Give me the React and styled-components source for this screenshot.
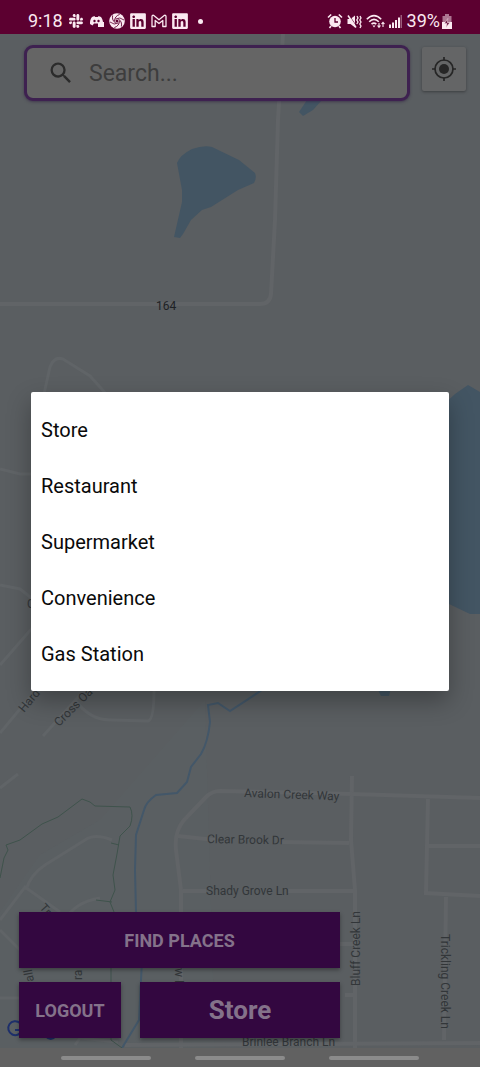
import React, { useState } from 'react';
import styled, { createGlobalStyle } from 'styled-components';
import { FaSlack, FaLinkedin } from 'react-icons/fa';
import { MdSearch } from 'react-icons/md';

const GlobalStyle = createGlobalStyle`
  * {
    box-sizing: border-box;
  }

  body {
    margin: 0;
    font-family: Roboto, 'Noto Sans', sans-serif;
  }

  button,
  input {
    font-family: inherit;
  }
`;

const Screen = styled.div`
  display: flex;
  flex-direction: column;
  min-height: 100vh;
  background: #5a5e61;
`;

const StatusBar = styled.header`
  display: flex;
  justify-content: space-between;
  align-items: center;
  height: 34px;
  padding: 8px 28px 0;
  background: #5c0030;
  color: #fbe9f1;
`;

const StatusGroup = styled.div`
  display: flex;
  align-items: center;
  gap: ${(props) => props.$gap}px;
`;

const StatusText = styled.span`
  font-size: 18px;
  line-height: 20px;
`;

const LinkedinIcon = styled(FaLinkedin)`
  width: 16px;
  height: 18px;
`;

const Dot = styled.span`
  width: 5px;
  height: 5px;
  margin-left: 5px;
  border-radius: 50%;
  background: currentColor;
`;

const MapArea = styled.main`
  position: relative;
  display: flex;
  flex: 1;
  flex-direction: column;
  justify-content: space-between;
  overflow: hidden;
`;

const MapCanvas = styled.svg`
  position: absolute;
  inset: 0;
  width: 100%;
  height: 100%;
  font-size: 12px;
`;

const SearchRow = styled.div`
  position: relative;
  display: flex;
  align-items: flex-start;
  gap: 12px;
  padding: 11px 14px 0 24px;
`;

const SearchBox = styled.label`
  display: flex;
  flex: 1;
  align-items: center;
  gap: 14px;
  min-width: 0;
  height: 56px;
  padding: 0 20px;
  border: 3px solid #3e2150;
  border-radius: 9px;
  background: #656565;
  box-shadow: 0 1px 3px rgba(40, 20, 60, 0.5);
  color: #2b2b2b;
`;

const SearchInput = styled.input`
  flex: 1;
  min-width: 0;
  padding: 0;
  border: 0;
  outline: 0;
  background: transparent;
  color: #2b2b2b;
  font-size: 23px;

  &::placeholder {
    color: #3d3d3d;
    opacity: 1;
  }
`;

const LocateButton = styled.button`
  display: flex;
  align-items: center;
  justify-content: center;
  width: 44px;
  height: 44px;
  margin-top: 2px;
  padding: 0;
  border: 0;
  border-radius: 2px;
  background: #646566;
  box-shadow: 0 1px 3px rgba(0, 0, 0, 0.35);
  color: #262626;
`;

const Actions = styled.div`
  position: relative;
  display: flex;
  flex-direction: column;
  gap: 14px;
  padding: 0 140px 10px 19px;
`;

const ActionRow = styled.div`
  display: flex;
  gap: 19px;
`;

const ActionButton = styled.button`
  flex: ${(props) => (props.$width ? 'none' : '1 1 auto')};
  width: ${(props) => (props.$width ? `${props.$width}px` : 'auto')};
  height: 56px;
  padding: 0;
  border: 0;
  background: #330740;
  box-shadow: 0 2px 4px rgba(0, 0, 0, 0.35);
  color: #84728a;
  font-size: ${(props) => (props.$large ? 26 : 18)}px;
  font-weight: 700;
`;

const Overlay = styled.div`
  position: absolute;
  inset: 0;
  display: flex;
  align-items: center;
  justify-content: center;
  padding: 0 31px;
`;

const Dialog = styled.div`
  display: flex;
  flex-direction: column;
  width: 100%;
  padding: 10px 0 9px;
  border-radius: 2px;
  background: #fff;
  box-shadow: 0 10px 24px rgba(0, 0, 0, 0.3);
`;

const Option = styled.button`
  height: 56px;
  padding: 0 10px;
  border: 0;
  background: transparent;
  color: #0a0a0a;
  font-size: 20px;
  text-align: left;
`;

const NavBar = styled.nav`
  display: flex;
  justify-content: center;
  gap: 44px;
  height: 19px;
  padding-top: 8px;
  background: #616161;
`;

const NavHandle = styled.button`
  width: 90px;
  height: 4px;
  padding: 0;
  border: 0;
  border-radius: 2px;
  background: #8b8b8b;
`;

const places = ['Store', 'Restaurant', 'Supermarket', 'Convenience', 'Gas Station'];

const DiscordIcon = () => (
  <svg width="15" height="14" viewBox="0 0 15 14" fill="currentColor">
    <path d="M3 3 5.500 2 6 3h3l.5-1L12 3c1.200 1.500 1.800 3.200 2 5H9.500V9.500H5L3.500 11.500 1 10C.8 7.500 1.400 5 3 3z" />
    <path d="M9 8h6v5H9z" />
    <circle cx="5.500" cy="7" r="1.200" fill="#5c0030" />
    <circle cx="9.500" cy="7" r="1.200" fill="#5c0030" />
  </svg>
);

const swirlAngles = [0, 60, 120, 180, 240, 300];

const SwirlIcon = () => (
  <svg width="16" height="16" viewBox="0 0 16 16">
    <circle cx="8" cy="8" r="7.800" fill="currentColor" />
    <g fill="none" stroke="#5c0030" strokeWidth="0.800">
      {swirlAngles.map((angle) => (
        <path key={angle} d="M6.500 6Q11 3.500 15 7" transform={`rotate(${angle} 8 8)`} />
      ))}
    </g>
    <circle cx="8" cy="8" r="1.500" fill="#5c0030" />
  </svg>
);

const GmailIcon = () => (
  <svg width="16" height="14" viewBox="0 0 16 14" fill="none" stroke="currentColor" strokeWidth="1.300">
    <path d="M1 12.500V2.500Q1 1 2.500 1.300L8 5.800 13.500 1.300Q15 1 15 2.500V12.500H11.800V6.500L8 9.500 4.200 6.500V12.500z" strokeLinejoin="round" />
  </svg>
);

const AlarmIcon = () => (
  <svg width="16" height="16" viewBox="0 0 16 16">
    <circle cx="8" cy="8.500" r="5.800" fill="currentColor" />
    <path d="M1 4.500 4.200 1.500M15 4.500 11.800 1.500M4 13 2.500 15M12 13 13.500 15" stroke="currentColor" strokeWidth="1.600" />
    <path d="M8 5V9H11" fill="none" stroke="#5c0030" strokeWidth="1.300" />
  </svg>
);

const VibrateIcon = () => (
  <svg width="15" height="15" viewBox="0 0 15 15">
    <path d="M.5 5H3.500L8 1.500V13.500L3.500 10H.5z" fill="currentColor" />
    <path d="M2 1 10 13" stroke="#5c0030" strokeWidth="0.800" />
    <path d="M1 1.500 9 13.500" stroke="currentColor" strokeWidth="1.500" />
    <path d="M10 2 11 4 9.800 6 11 8 9.800 10M13 2 14 4 12.800 6 14 8 12.800 10 14 12 13 14" fill="none" stroke="currentColor" strokeWidth="1.300" />
  </svg>
);

const WifiIcon = () => (
  <svg width="19" height="15" viewBox="0 0 19 15" fill="none" stroke="currentColor" strokeWidth="1.600">
    <path d="M.8 5.200Q8 -2 15.200 5.200M3.200 7.800Q8 3 12.800 7.800M5.500 10.200Q8 8 10.300 10.200" />
    <path d="M6.500 11.500 8 13.500 9.500 11.500z" fill="currentColor" stroke="none" />
    <path d="M13 9V13M11.500 11.500 13 13.300 14.500 11.500M17 13V8.500M15.500 10 17 8.300 18.500 10" strokeWidth="1.100" />
  </svg>
);

const SignalIcon = () => (
  <svg width="13" height="14" viewBox="0 0 13 14" fill="currentColor">
    <path d="M0 10.500h2V14H0zM3 8.500h2V14H3zM6 6h2v8H6zM9 3.500h2V14H9z" />
    <path d="M11.500 1H13v13h-1.500z" opacity="0.400" />
  </svg>
);

const BatteryIcon = () => (
  <svg width="10" height="15" viewBox="0 0 10 15">
    <path d="M3 0h4v2h2.500v13H.5V2H3z" fill="currentColor" opacity="0.500" />
    <path d="M0 8h10v7H0z" fill="currentColor" />
    <path d="M5.800 4.500 2.500 9.500H5L4 13.500 7.800 8.500H5.300z" fill="#5c0030" stroke="#fbe9f1" strokeWidth="0.500" />
  </svg>
);

const LocateIcon = () => (
  <svg width="26" height="26" viewBox="0 0 26 26" fill="none" stroke="currentColor" strokeWidth="1.700">
    <circle cx="13" cy="13" r="9" />
    <circle cx="13" cy="13" r="5" fill="currentColor" stroke="none" />
    <path d="M13 1V4.500M13 21.500V25M1 13H4.500M21.500 13H25" />
  </svg>
);

// Viewport units of the map start right below the status bar
const StreetMap = () => (
  <MapCanvas viewBox="0 34 480 1014" preserveAspectRatio="xMidYMid slice" aria-hidden="true">
    <path d="M0 912 40 855 100 820 205 700 215 1048H0z" fill="#5a6163" opacity="0.400" />
    <g fill="#435563">
      <path d="M177 163Q180 155 192 149Q204 145 212 147L239 160 255 173Q257 178 254 183L238 190 211 207 202 210 191 220 183 234 180 238 174 237 182 202 182 190z" />
      <path d="M299 112 307 100H322L313 110 303 116z" />
      <path d="M440 408 455 394 468 385 480 392V614H470L449 604z" />
      <path d="M377 688H391L389 696H381z" />
    </g>
    <g fill="none" stroke="#616467" strokeWidth="4">
      <path d="M283 34 278 120 275 220 271 294Q270 304 260 304H0" />
      <path d="M352 776 351 840 355 890V1048" />
      <path d="M480 798 352 794 220 791Q212 791 206 797L184 820Q174 832 176 850L181 890V1048" />
      <path d="M428 799 426 893 480 896M428 846H480" />
      <path d="M446 897 444 1040" />
      <path d="M178 836 215 840M280 842 349 843M183 891H206M288 891H354" />
      <path d="M340 944H354M345 995H354M125 1045 480 1043" />
    </g>
    <g fill="none" stroke="#606467" strokeWidth="3">
      <path d="M44 394 50 367Q54 356 63 359L90 376 108 396" />
      <path d="M0 469 20 474H40M0 585 20 589 34 600" />
      <path d="M0 665 34 626M0 733 30 697M43 736 80 695" />
      <path d="M75 700Q90 720 110 720L148 721Q154 720 154 690" />
      <path d="M0 788 18 774M26 890Q30 875 45 865L85 840Q95 833 112 840" />
      <path d="M0 920 25 887 60 912M0 930 30 960M65 920Q75 902 100 898M0 998H22M75 1045 80 1038 118 1042" />
    </g>
    <path
      d="M275 690H262L230 711Q224 707 218 703L208 705 210 722Q208 742 201 754L191 767 187 782 177 793 156 795Q146 802 144 810L136 835 135 870 136 912 142 960 139 1020 122 1048"
      fill="none"
      stroke="#435769"
      strokeWidth="2"
    />
    <g fill="none" stroke="#3f534c">
      <path d="M0 878 4 858 8 850 6 845 20 840 42 824 58 817 82 799 90 802 95 806 130 807Q134 815 130 826L120 836 117 854 113 875 115 890 110 902 114 912 111 965V1040L122 1048" />
      <path d="M111 843 119 845M96 900 112 902" />
    </g>
    <g fill="#323639">
      <text x="156" y="310" fill="#1e2225">164</text>
      <text x="244" y="797" transform="rotate(2 244 797)">Avalon Creek Way</text>
      <text x="207" y="843" transform="rotate(1 207 843)">Clear Brook Dr</text>
      <text x="206" y="895">Shady Grove Ln</text>
      <text x="242" y="1046">Brinlee Branch Ln</text>
      <text x="360" y="986" transform="rotate(-90 360 986)">Bluff Creek Ln</text>
      <text x="441" y="934" transform="rotate(90 441 934)">Trickling Creek Ln</text>
      <text x="24" y="713" transform="rotate(-50 24 713)">Hard</text>
      <text x="59" y="727" transform="rotate(-45 59 727)">Cross Oa</text>
      <text x="27" y="608">C</text>
      <text x="39" y="908" transform="rotate(48 39 908)">Tr</text>
      <text x="34" y="981" transform="rotate(-100 34 981)">all</text>
      <text x="82" y="980" transform="rotate(-90 82 980)">ra</text>
      <text x="175" y="968" transform="rotate(90 175 968)">w L</text>
    </g>
    <g fill="none" stroke="#1d2f6b" strokeWidth="2">
      <path d="M20 1023A7 7 0 1 0 22 1030H15" />
      <path d="M46 1036Q51 1041 55 1036" strokeWidth="3" />
    </g>
  </MapCanvas>
);

function PhoneStatus() {
  return (
    <StatusBar>
      <StatusGroup $gap={5}>
        <StatusText>9:18</StatusText>
        <FaSlack size={16} />
        <DiscordIcon />
        <SwirlIcon />
        <LinkedinIcon />
        <GmailIcon />
        <LinkedinIcon />
        <Dot />
      </StatusGroup>
      <StatusGroup $gap={5}>
        <StatusGroup $gap={4}>
          <AlarmIcon />
          <VibrateIcon />
          <WifiIcon />
          <SignalIcon />
        </StatusGroup>
        <StatusGroup $gap={2}>
          <StatusText>39%</StatusText>
          <BatteryIcon />
        </StatusGroup>
      </StatusGroup>
    </StatusBar>
  );
}

function App() {
  const [place, setPlace] = useState('Store');
  const [open, setOpen] = useState(true);

  const choose = (name) => {
    setPlace(name);
    setOpen(false);
  };

  return (
    <Screen>
      <GlobalStyle />
      <PhoneStatus />
      <MapArea>
        <StreetMap />
        <SearchRow>
          <SearchBox>
            <MdSearch size={28} />
            <SearchInput type="text" placeholder="Search..." aria-label="Search" />
          </SearchBox>
          <LocateButton type="button" aria-label="My location">
            <LocateIcon />
          </LocateButton>
        </SearchRow>
        <Actions>
          <ActionButton type="button">FIND PLACES</ActionButton>
          <ActionRow>
            <ActionButton type="button" $width={102}>LOGOUT</ActionButton>
            <ActionButton type="button" $large aria-haspopup="dialog" onClick={() => setOpen(true)}>
              {place}
            </ActionButton>
          </ActionRow>
        </Actions>
        {open && (
          <Overlay>
            <Dialog role="dialog" aria-label="Place type">
              {places.map((name) => (
                <Option key={name} type="button" onClick={() => choose(name)}>
                  {name}
                </Option>
              ))}
            </Dialog>
          </Overlay>
        )}
      </MapArea>
      <NavBar>
        <NavHandle type="button" aria-label="Recent apps" />
        <NavHandle type="button" aria-label="Home" />
        <NavHandle type="button" aria-label="Back" />
      </NavBar>
    </Screen>
  );
}

export default App;
